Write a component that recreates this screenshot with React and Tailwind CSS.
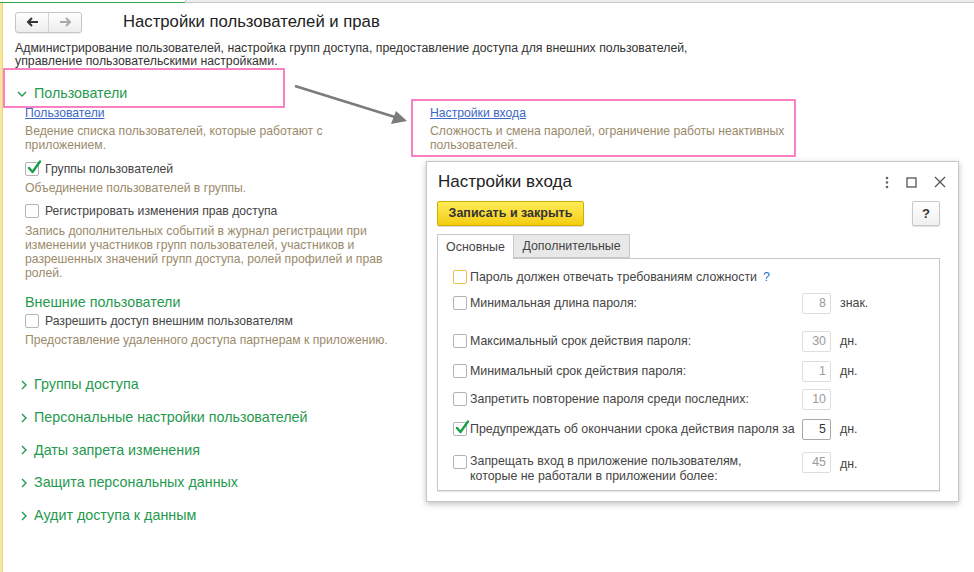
import React from "react";

const F = { fontFamily: '"Liberation Sans", Arial, sans-serif' };

function Check({ checked, focus }) {
  return (
    <span
      className={
        "relative inline-block w-[14px] h-[14px] shrink-0 bg-white rounded-[2px] border " +
        (focus ? "border-[#e6c34a]" : "border-[#b4b4b4]")
      }
    >
      {checked && (
        <svg className="absolute left-[1px] top-[-3px]" width="15" height="15" viewBox="0 0 15 15">
          <path d="M2 8 L5.5 12 L13 1.5" fill="none" stroke="#17a046" strokeWidth="2.4" strokeLinecap="round" strokeLinejoin="round" />
        </svg>
      )}
    </span>
  );
}

function Chevron({ down }) {
  return down ? (
    <svg width="10" height="8" viewBox="0 0 10 8">
      <path d="M1 2 L5 6 L9 2" fill="none" stroke="#1f9a4e" strokeWidth="1.4" />
    </svg>
  ) : (
    <svg width="8" height="10" viewBox="0 0 8 10">
      <path d="M2 1 L6 5 L2 9" fill="none" stroke="#1f9a4e" strokeWidth="1.4" />
    </svg>
  );
}

function Desc({ children, className = "" }) {
  return <div className={"text-[12.2px] leading-[14px] text-[#9a8a6a] " + className}>{children}</div>;
}

function CheckRow({ checked, label, className = "" }) {
  return (
    <div className={"flex items-center h-[16px] gap-[6px] " + className}>
      <Check checked={checked} />
      <span className="text-[12.2px] text-[#444]">{label}</span>
    </div>
  );
}

function Collapsed({ label }) {
  return (
    <div className="flex items-center h-[20px]">
      <span className="w-[19px] pl-[5px] flex items-center">
        <Chevron />
      </span>
      <span className="text-[14.3px] text-[#1f9a4e]">{label}</span>
    </div>
  );
}

function NumInput({ value, enabled }) {
  return (
    <div
      className={
        "w-[29px] h-[21px] shrink-0 rounded-[2px] border flex items-center justify-end pr-[4px] text-[12.4px] bg-white " +
        (enabled ? "border-[#a8a8a8] text-[#333]" : "border-[#dedede] text-[#9a9a9a]")
      }
    >
      {value}
    </div>
  );
}

function DRow({ label, value, unit, checked, enabled, className = "" }) {
  return (
    <div className={"flex items-center h-[21px] " + className}>
      <div className="w-[349px] flex items-center gap-[3px]">
        <Check checked={checked} />
        <span className="text-[12.4px] text-[#444] whitespace-nowrap">{label}</span>
      </div>
      {value !== undefined && <NumInput value={value} enabled={enabled} />}
      {unit && <span className="ml-[9px] text-[12.4px] text-[#444]">{unit}</span>}
    </div>
  );
}

export default function App() {
  return (
    <div className="relative w-[974px] h-[572px] overflow-hidden bg-white text-[#333]" style={F}>
      {/* top strip */}
      <div className="flex h-[3px]">
        <div className="w-[185px] bg-white border-b border-[#2ea64a]" />
        <div className="w-[1px] bg-[#c8c8c8]" />
        <div className="flex-1 bg-[#ececec] border-b border-[#c9c9c9]" />
      </div>
      <div className="flex h-[569px]">
        <div className="w-[3px] bg-[#f9e79b] border-r border-[#ecd580]" />
        <div className="flex-1 pl-[12px]">
          {/* header */}
          <div className="mt-[8px] flex items-center h-[22px]">
            <div className="flex w-[67px] h-[21px] rounded-[3px] border border-[#c6c6c6] bg-gradient-to-b from-white to-[#ededed] shadow-[0_1px_1px_rgba(0,0,0,0.08)]">
              <div className="flex-1 flex items-center justify-center border-r border-[#d4d4d4]">
                <svg width="13" height="10" viewBox="0 0 13 10">
                  <path d="M12 5 H2.5 M6 1 L2 5 L6 9" fill="none" stroke="#333" strokeWidth="2" />
                </svg>
              </div>
              <div className="flex-1 flex items-center justify-center">
                <svg width="13" height="10" viewBox="0 0 13 10">
                  <path d="M1 5 H10.5 M7 1 L11 5 L7 9" fill="none" stroke="#a9a9a9" strokeWidth="2" />
                </svg>
              </div>
            </div>
            <div className="ml-[41px] text-[16.7px] text-[#222]">Настройки пользователей и прав</div>
          </div>
          <div className="mt-[9px] text-[12.3px] leading-[13px] text-[#333]">
            <div>Администрирование пользователей, настройка групп доступа, предоставление доступа для внешних пользователей,</div>
            <div>управление пользовательскими настройками.</div>
          </div>
          {/* Пользователи */}
          <div className="mt-[16px] flex items-center h-[20px]">
            <span className="w-[19px] pl-[2px] flex items-center">
              <Chevron down />
            </span>
            <span className="text-[14.3px] text-[#1f9a4e]">Пользователи</span>
          </div>
          <div className="pl-[10px]">
            <div className="mt-[2px] text-[12.2px] leading-[14px] text-[#3d68c4] underline">Пользователи</div>
            <Desc className="mt-[4px]">
              <div>Ведение списка пользователей, которые работают с</div>
              <div>приложением.</div>
            </Desc>
            <CheckRow checked label="Группы пользователей" className="mt-[9px]" />
            <Desc className="mt-[4px]">Объединение пользователей в группы.</Desc>
            <CheckRow label="Регистрировать изменения прав доступа" className="mt-[8px]" />
            <Desc className="mt-[5px]">
              <div>Запись дополнительных событий в журнал регистрации при</div>
              <div>изменении участников групп пользователей, участников и</div>
              <div>разрешенных значений групп доступа, ролей профилей и прав</div>
              <div>ролей.</div>
            </Desc>
            <div className="mt-[12px] h-[20px] leading-[20px] text-[14.3px] text-[#1f9a4e]">Внешние пользователи</div>
            <CheckRow label="Разрешить доступ внешним пользователям" className="mt-[1px]" />
            <Desc className="mt-[4px]">Предоставление удаленного доступа партнерам к приложению.</Desc>
          </div>
          <div className="mt-[28px] flex flex-col gap-[12.7px]">
            <Collapsed label="Группы доступа" />
            <Collapsed label="Персональные настройки пользователей" />
            <Collapsed label="Даты запрета изменения" />
            <Collapsed label="Защита персональных данных" />
            <Collapsed label="Аудит доступа к данным" />
          </div>
        </div>
      </div>

      {/* annotation: pink box 1 */}
      <div className="absolute left-[3px] top-[68px] w-[282px] h-[40px] border-2 border-[#fb80c4]" />
      {/* arrow */}
      <svg className="absolute left-[290px] top-[80px]" width="125" height="50" viewBox="0 0 125 50">
        <path d="M5 6 L108 38" stroke="#7b7b7b" strokeWidth="2.5" />
        <path d="M117 41 L101 44 L106 31 Z" fill="#7b7b7b" />
      </svg>
      {/* pink box 2 */}
      <div className="absolute left-[411px] top-[99px] w-[385px] h-[58px] border-2 border-[#fb80c4] pl-[17px] pt-[5px]">
        <div className="text-[12.2px] leading-[14px] text-[#3d68c4] underline">Настройки входа</div>
        <Desc className="mt-[4px]">
          <div>Сложность и смена паролей, ограничение работы неактивных</div>
          <div>пользователей.</div>
        </Desc>
      </div>

      {/* dialog */}
      <div className="absolute left-[426px] top-[161px] w-[533px] h-[341px] bg-white border border-[#c8c8c8] shadow-[0_2px_6px_rgba(0,0,0,0.25)] flex flex-col">
        <div className="flex items-center h-[38px] pl-[11px] pr-[12px] pt-[2px]">
          <div className="text-[17px] text-[#222]">Настройки входа</div>
          <div className="ml-auto flex items-center gap-[17px] text-[#555]">
            <svg width="4" height="13" viewBox="0 0 4 13">
              <circle cx="2" cy="2" r="1.3" fill="#666" />
              <circle cx="2" cy="6.5" r="1.3" fill="#666" />
              <circle cx="2" cy="11" r="1.3" fill="#666" />
            </svg>
            <svg width="11" height="11" viewBox="0 0 11 11">
              <rect x="1" y="1" width="9" height="9" fill="none" stroke="#555" strokeWidth="1.3" />
            </svg>
            <svg width="12" height="12" viewBox="0 0 12 12">
              <path d="M1 1 L11 11 M11 1 L1 11" stroke="#555" strokeWidth="1.3" />
            </svg>
          </div>
        </div>
        <div className="flex items-center pl-[10px] pr-[18px] mt-[1px]">
          <div className="h-[25px] w-[147px] flex items-center justify-center rounded-[2px] border border-[#cfae00] bg-gradient-to-b from-[#ffec55] to-[#f3cd00] text-[12.5px] font-bold text-[#333] shadow-[0_1px_1px_rgba(0,0,0,0.15)]">
            Записать и закрыть
          </div>
          <div className="ml-auto w-[28px] h-[25px] flex items-center justify-center rounded-[2px] border border-[#c8c8c8] bg-gradient-to-b from-white to-[#f0f0f0] text-[13px] font-bold text-[#333] shadow-[0_1px_1px_rgba(0,0,0,0.12)]">
            ?
          </div>
        </div>
        {/* tabs */}
        <div className="flex pl-[10px] mt-[8px] h-[24px]">
          <div className="w-[77px] flex items-center justify-center bg-white border border-b-0 border-[#c8c8c8] text-[12.4px] text-[#444] relative z-10 h-[25px]">
            Основные
          </div>
          <div className="w-[116px] flex items-center justify-center bg-[#e8e8e8] border border-l-0 border-[#c8c8c8] text-[12.4px] text-[#444]">
            Дополнительные
          </div>
        </div>
        <div className="ml-[10px] w-[503px] h-[233px] border border-[#c8c8c8] shadow-[0_1px_1px_rgba(0,0,0,0.1)] pl-[15px] pt-[10px]">
          <div className="flex items-center h-[16px] gap-[3px]">
            <Check focus />
            <span className="text-[12.4px] text-[#444]">Пароль должен отвечать требованиям сложности</span>
            <span className="ml-[3px] text-[12.4px] text-[#1e73c8]">?</span>
          </div>
          <DRow className="mt-[7.5px]" label="Минимальная длина пароля:" value="8" unit="знак." />
          <DRow className="mt-[17px]" label="Максимальный срок действия пароля:" value="30" unit="дн." />
          <DRow className="mt-[9px]" label="Минимальный срок действия пароля:" value="1" unit="дн." />
          <DRow className="mt-[7.5px]" label="Запретить повторение пароля среди последних:" value="10" />
          <DRow className="mt-[8.5px]" checked enabled label="Предупреждать об окончании срока действия пароля за" value="5" unit="дн." />
          <div className="mt-[12px] flex items-start">
            <div className="w-[349px] flex items-start gap-[3px]">
              <span className="mt-[3px] flex">
                <Check />
              </span>
              <div className="text-[12.4px] leading-[15px] text-[#444] mt-[2px]">
                <div>Запрещать вход в приложение пользователям,</div>
                <div>которые не работали в приложении более:</div>
              </div>
            </div>
            <NumInput value="45" />
            <span className="ml-[9px] mt-[3px] text-[12.4px] text-[#444]">дн.</span>
          </div>
        </div>
      </div>
    </div>
  );
}
